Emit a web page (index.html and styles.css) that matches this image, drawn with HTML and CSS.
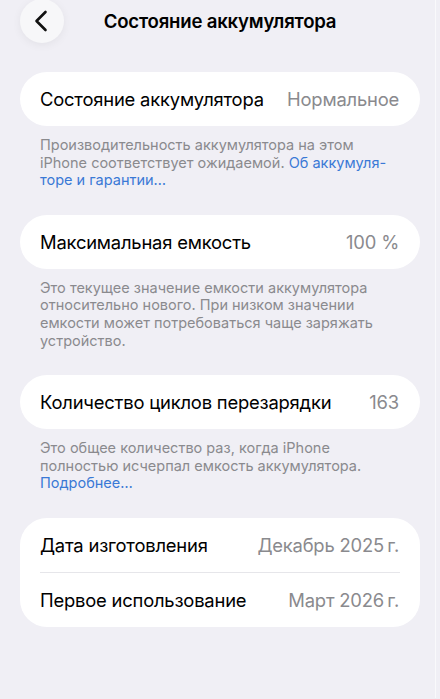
FILE: index.html
```html
<!DOCTYPE html>
<html lang="ru">
<head>
<meta charset="utf-8">
<link rel="stylesheet" href="styles.css">
</head>
<body>
<div class="screen">
  <header class="nav">
    <button class="back" aria-label="Назад">
      <svg width="16" height="22" viewBox="0 0 16 22"><path d="M12.5 2 L3.5 11 L12.5 20" fill="none" stroke="#111" stroke-width="2.6" stroke-linecap="round" stroke-linejoin="round"/></svg>
    </button>
    <h1 class="title">Состояние аккумулятора</h1>
    <span class="spacer"></span>
  </header>

  <section class="group">
    <div class="card">
      <div class="row"><span class="label">Состояние аккумулятора</span><span class="value">Нормальное</span></div>
    </div>
    <p class="note">Производительность аккумулятора на этом iPhone соответствует ожидаемой. <a class="link">Об аккумуля-</a><br><a class="link">торе и гарантии…</a></p>
  </section>

  <section class="group">
    <div class="card">
      <div class="row"><span class="label">Максимальная емкость</span><span class="value">100 %</span></div>
    </div>
    <p class="note">Это текущее значение емкости аккумулятора относительно нового. При низком значении емкости может потребоваться чаще заряжать устройство.</p>
  </section>

  <section class="group">
    <div class="card">
      <div class="row"><span class="label">Количество циклов перезарядки</span><span class="value">163</span></div>
    </div>
    <p class="note">Это общее количество раз, когда iPhone полностью исчерпал емкость аккумулятора. <a class="link">Подробнее…</a></p>
  </section>

  <section class="group">
    <div class="card">
      <div class="row"><span class="label">Дата изготовления</span><span class="value">Декабрь 2025&#8239;г.</span></div>
      <div class="divider"></div>
      <div class="row"><span class="label">Первое использование</span><span class="value">Март 2026&#8239;г.</span></div>
    </div>
  </section>
</div>
</body>
</html>
```
FILE: styles.css
```css
html, body {
  margin: 0;
  padding: 0;
  background: #f0eff5;
}
body {
  font-family: Inter, "Noto Sans", "Liberation Sans", sans-serif;
  color: #000;
  width: 440px;
  height: 699px;
  overflow: hidden;
}
.screen {
  width: 440px;
  height: 699px;
  box-sizing: border-box;
  padding: 0 20px;
  position: relative;
}
.screen::after {
  content: "";
  position: absolute;
  top: 0;
  bottom: 0;
  left: 435px;
  width: 1px;
  background: #f9f9fb;
}
.nav {
  display: grid;
  grid-template-columns: 44px 1fr 44px;
  align-items: center;
  height: 44px;
  margin-top: -1px;
}
.back {
  width: 44px;
  height: 44px;
  border-radius: 50%;
  border: none;
  background: #f7f7f9;
  box-shadow: 0 2px 10px rgba(0,0,0,0.06);
  display: flex;
  align-items: center;
  justify-content: center;
  padding: 0 3px 0 0;
}
.title {
  margin: 0;
  font-size: 18.6px;
  font-weight: 600;
  letter-spacing: -0.2px;
  text-align: center;
  white-space: nowrap;
}
.group {
  width: 400px;
}
.nav + .group { margin-top: 29px; }
.card {
  background: #fff;
  border-radius: 27px;
  padding: 0 21px 0 20px;
}
.row {
  height: 54px;
  display: flex;
  align-items: center;
  justify-content: space-between;
  font-size: 18.4px;
  letter-spacing: -0.2px;
}
.value {
  color: #8a8a8e;
}
.divider {
  height: 1px;
  background: #e6e6ea;
  margin-right: -1px;
}
.note {
  margin: 0;
  padding: 10px 20px 26px 20px;
  font-size: 14.5px;
  line-height: 17.6px;
  color: #8a8a8e;
}
.link {
  color: #3a79d6;
}
```
